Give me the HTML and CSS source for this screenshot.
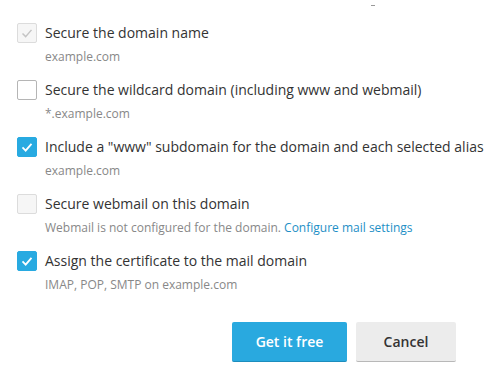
FILE: index.html
```html
<!DOCTYPE html>
<html lang="en">
<head>
    <meta charset="UTF-8">
    <title>Let's Encrypt options</title>
    <link rel="stylesheet" href="styles.css">
</head>
<body>
<div class="dialog">
    <span class="dash"></span>
    <ul class="options">
        <li class="option">
            <label class="line">
                <span class="check disabled checked">
                    <svg viewBox="0 0 20 20"><polyline points="5,10.5 8.5,14 15,6.5"/></svg>
                </span>
                <span class="title">Secure the domain name</span>
            </label>
            <p class="desc">example.com</p>
        </li>
        <li class="option">
            <label class="line">
                <span class="check"></span>
                <span class="title">Secure the wildcard domain (including www and webmail)</span>
            </label>
            <p class="desc">*.example.com</p>
        </li>
        <li class="option">
            <label class="line">
                <span class="check checked">
                    <svg viewBox="0 0 20 20"><polyline points="5,10.5 8.5,14 15,6.5"/></svg>
                </span>
                <span class="title">Include a "www" subdomain for the domain and each selected alias</span>
            </label>
            <p class="desc">example.com</p>
        </li>
        <li class="option">
            <label class="line">
                <span class="check disabled"></span>
                <span class="title">Secure webmail on this domain</span>
            </label>
            <p class="desc">Webmail is not configured for the domain. <a href="#">Configure mail settings</a></p>
        </li>
        <li class="option">
            <label class="line">
                <span class="check checked">
                    <svg viewBox="0 0 20 20"><polyline points="5,10.5 8.5,14 15,6.5"/></svg>
                </span>
                <span class="title">Assign the certificate to the mail domain</span>
            </label>
            <p class="desc">IMAP, POP, SMTP on example.com</p>
        </li>
    </ul>
    <div class="buttons">
        <button class="btn primary">Get it free</button>
        <button class="btn">Cancel</button>
    </div>
</div>
</body>
</html>
```

FILE: styles.css
```css
*{
    margin: 0;
    padding: 0;
    box-sizing: border-box;
}
body{
    font-family: "Open Sans", "Liberation Sans", sans-serif;
    color: #333;
    background: #fff;
}
.dialog{
    width: 500px;
    height: 380px;
    padding: 23px 44px 0 17px;
    position: relative;
}
.dash{
    position: absolute;
    left: 371px;
    top: 5px;
    width: 4px;
    height: 1px;
    background: #999;
}
.options{
    list-style: none;
}
.option{
    margin-bottom: 15px;
}
.line{
    display: flex;
    align-items: center;
    gap: 8px;
    height: 20px;
    white-space: nowrap;
}
.title{
    font-size: 14px;
    line-height: 20px;
}
.check{
    flex: none;
    width: 20px;
    height: 20px;
    border: 1px solid #b5b5b5;
    border-radius: 2px;
    background: #fff;
    display: flex;
    align-items: center;
    justify-content: center;
}
.check svg{
    width: 20px;
    height: 20px;
    fill: none;
    stroke: #fff;
    stroke-width: 2;
}
.check.checked{
    background: #28aae1;
    border-color: #28aae1;
}
.check.disabled{
    background: #f6f6f6;
    border-color: #dcdcdc;
}
.check.disabled svg{
    stroke: #c4c4c4;
    stroke-width: 1.6;
}
.desc{
    margin-top: 6px;
    padding-left: 28px;
    font-size: 12px;
    line-height: 16px;
    color: #888;
    white-space: nowrap;
}
.desc a{
    color: #1e8fc6;
    text-decoration: none;
}
.buttons{
    display: flex;
    justify-content: flex-end;
    gap: 9px;
    padding-top: 14px;
}
.btn{
    height: 40px;
    width: 100px;
    font-family: inherit;
    font-size: 14px;
    font-weight: 600;
    color: #333;
    background: #ececec;
    border: none;
    border-bottom: 1px solid #b8b8b8;
    border-radius: 2px;
}
.btn.primary{
    width: 115px;
    color: #fff;
    background: #29a9df;
    border-bottom-color: #1d8dbd;
}
```
